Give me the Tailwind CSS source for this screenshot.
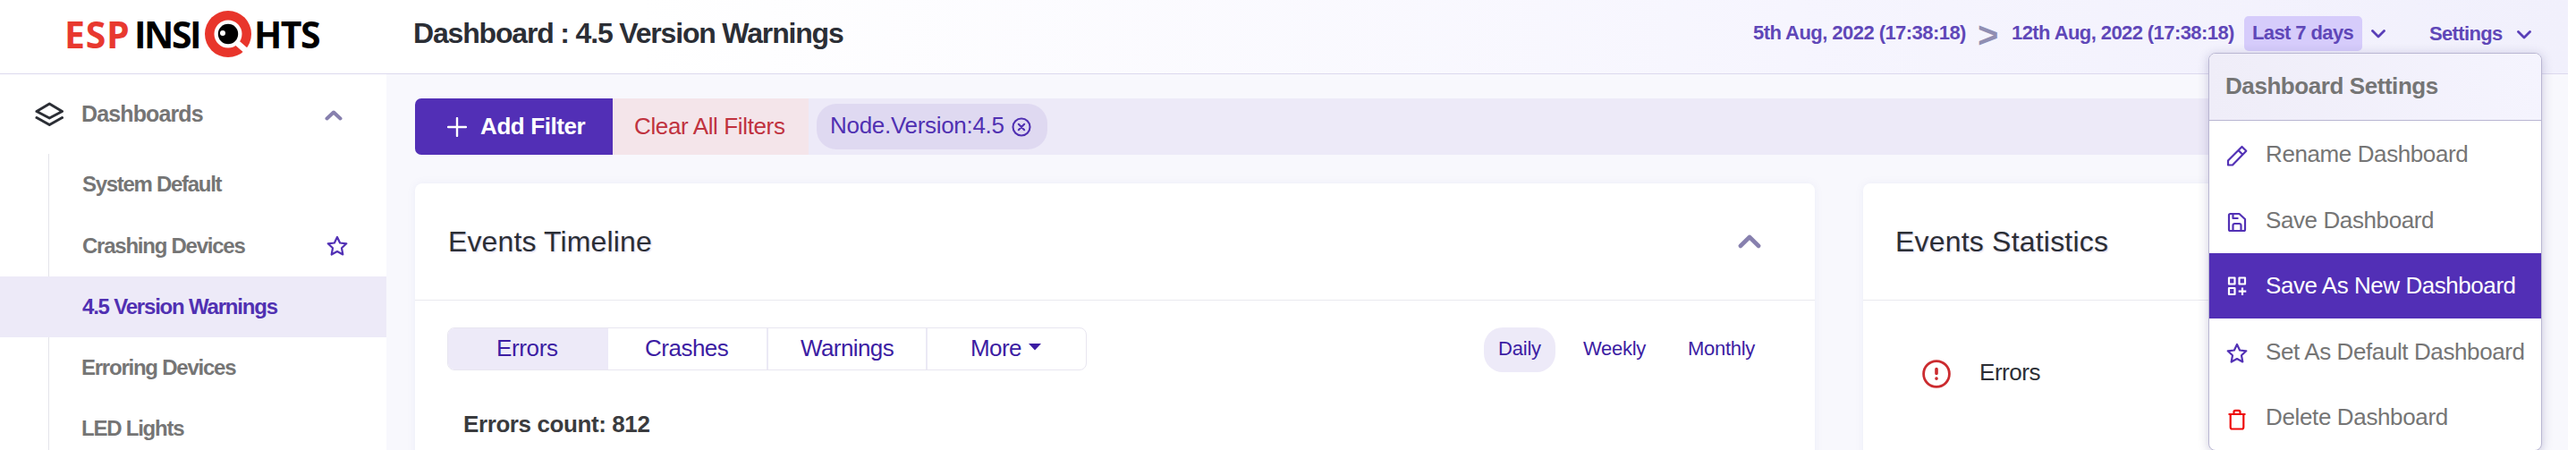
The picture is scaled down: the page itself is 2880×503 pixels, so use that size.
<!DOCTYPE html>
<html lang="en">
<head>
<meta charset="utf-8">
<title>ESP Insights</title>
<script src="https://cdn.jsdelivr.net/npm/@tailwindcss/browser@4"></script>
</head>
<body class="bg-white font-['Liberation_Sans',Arial,sans-serif] whitespace-nowrap">
<div class="relative w-[2880px] h-[503px] overflow-hidden flex flex-col">

  <!-- Top bar -->
  <header class="w-[2871px] h-[83px] shrink-0 border-b border-[#dcd9ee] bg-linear-to-r from-white from-25% via-[#f6f5fe] via-70% to-[#f1f0fc] flex">
    <div class="w-[462px] h-[75px] flex items-center pl-[72px] font-['Open_Sans',sans-serif] font-bold text-[41px] leading-[60px]">
      <span class="w-[78px] text-[#e8392f] tracking-[0.7px]">ESP</span>
      <span class="w-[78px] text-black tracking-[-2.5px]">INSI</span>
      <svg class="w-[54px] h-[54px] shrink-0 mt-px" viewBox="-27 -27 54 54">
        <circle r="26" fill="#e8352b"/>
        <circle r="15.5" fill="#fff"/>
        <path d="M9 9L21 19.5" stroke="#fff" stroke-width="6.5"/>
        <circle r="11.2" fill="#000"/>
        <circle cx="-6" cy="-1" r="3" fill="#fff"/>
      </svg>
      <span class="pl-[2px] text-black tracking-[-1.6px]">HTS</span>
    </div>
    <h1 class="w-[1498px] leading-[74px] font-bold text-[32px] tracking-[-1.17px] text-[#2b2e35]">Dashboard : 4.5 Version Warnings</h1>
    <div class="flex h-[74px] leading-[74px] text-[22px] font-bold text-[#5f47b8]">
      <span class="w-[250px] tracking-[-0.55px]">5th Aug, 2022 (17:38:18)</span>
      <span class="w-[39px] pl-px text-[40px] leading-[78px] text-[#908eb2]">&gt;</span>
      <span class="w-[260px] tracking-[-0.58px]">12th Aug, 2022 (17:38:18)</span>
      <span class="w-[132px] h-[39px] mt-[18px] leading-[38px] pl-[9px] rounded-[5px] bg-[#d6ccfb] tracking-[-0.6px]">Last 7 days</span>
      <svg class="w-4 h-3 ml-[10px] mt-8" viewBox="0 0 16 12" fill="none" stroke="#5a3fb8" stroke-width="2.8" stroke-linecap="round" stroke-linejoin="round"><path d="M1.500 2.500L8 9L14.500 2.500"/></svg>
      <span class="ml-[49px] w-[98px] leading-[75px] tracking-[-0.65px]">Settings</span>
      <svg class="w-4 h-3 mt-[33px]" viewBox="0 0 16 12" fill="none" stroke="#5a3fb8" stroke-width="2.8" stroke-linecap="round" stroke-linejoin="round"><path d="M1.500 2.500L8 9L14.500 2.500"/></svg>
    </div>
  </header>

  <div class="flex w-[2871px] h-[420px]">
    <!-- Sidebar -->
    <nav class="w-[432px] shrink-0 bg-white font-bold text-[#757575]">
      <div class="h-[89px] flex items-center pl-[39px]">
        <svg class="w-[33px] h-[28px]" viewBox="0 0 33 28" fill="none" stroke="#2b2e35" stroke-width="3" stroke-linecap="round" stroke-linejoin="round"><path d="M16.300 2L30.500 10.500L16.300 18L2 10.500ZM2 17.500L16.300 25.500L30.500 17.500"/></svg>
        <span class="ml-[19px] w-[272px] text-[25px] tracking-[-0.87px]">Dashboards</span>
        <svg class="w-5 h-3 mt-[2px]" viewBox="0 0 20 12" fill="none" stroke="#8780ae" stroke-width="4" stroke-linecap="round" stroke-linejoin="round"><path d="M2.500 9.500L10 2.500L17.500 9.500"/></svg>
      </div>
      <ul class="text-[24px] tracking-[-1.24px]">
        <li class="h-[68px] flex items-center"><i class="w-[55px] h-full border-r border-[#e4e4ea]"></i><span class="pl-[37px] tracking-[-1.3px]">System Default</span></li>
        <li class="h-[69px] flex items-center"><i class="w-[55px] h-full border-r border-[#e4e4ea]"></i><span class="pl-[37px] w-[310px]">Crashing Devices</span>
          <svg class="w-6 h-6" viewBox="0 0 24 24" fill="none" stroke="#5231b5" stroke-width="2.200" stroke-linejoin="round"><path d="M12 2L15.100 8.500L22.300 9.300L17 14.200L18.300 21.500L12 18L5.700 21.500L7 14.200L1.700 9.300L8.900 8.500Z"/></svg>
        </li>
        <li class="h-[68px] flex items-center bg-[#edeaf8] text-[#5030b2]"><span class="pl-[92px] tracking-[-1.2px]">4.5 Version Warnings</span></li>
        <li class="h-[68px] flex items-center"><i class="w-[55px] h-full border-r border-[#e4e4ea]"></i><span class="pl-[36px]">Erroring Devices</span></li>
        <li class="h-[68px] flex items-center"><i class="w-[55px] h-full border-r border-[#e4e4ea]"></i><span class="pl-[36px]">LED Lights</span></li>
      </ul>
    </nav>

    <!-- Content -->
    <main class="grow bg-[#f8f8fd] pt-[27px] pl-8 pr-[34px]">
      <div class="flex h-[63px] rounded-[7px] overflow-hidden bg-[#edeaf8] text-[26px] leading-[63px]">
        <div class="w-[221px] bg-[#522fb6] text-white font-bold flex items-center">
          <svg class="ml-[36px] w-[22px] h-[22px]" viewBox="0 0 22 22" stroke="#fff" stroke-width="2.400" stroke-linecap="round"><path d="M11 1V21M1 11H21"/></svg>
          <span class="ml-[15px] tracking-[-0.4px]">Add Filter</span>
        </div>
        <div class="w-[219px] bg-[#f4e5ea] text-[#c0323e] pl-[24px] tracking-[-0.37px]">Clear All Filters</div>
        <div class="ml-[9px] mt-[6px] w-[258px] h-[51px] rounded-[22px] bg-[#dfd9f1] text-[#5030b2] flex">
          <span class="ml-[15px] w-[203px] leading-[49px] tracking-[-0.3px]">Node.Version:4.5</span>
          <svg class="w-[22px] h-[22px] mt-[15px]" viewBox="0 0 22 22" fill="none" stroke="#5030b2" stroke-width="2.100" stroke-linecap="round"><circle cx="11" cy="11" r="9.500"/><path d="M7.800 7.800L14.200 14.200M14.200 7.800L7.800 14.200"/></svg>
        </div>
      </div>

      <div class="mt-8 flex gap-[54px]">
        <section class="w-[1565px] h-[320px] rounded-t-[8px] bg-white shadow-[0_0_10px_rgba(110,120,190,0.09)]">
          <div class="h-[131px] border-b border-[#eaeaef] flex items-center pl-[37px] text-[#2b2e35]">
            <h2 class="w-[1441px] text-[32px] tracking-[0.13px] [text-shadow:1px_1px_2px_#d5d2ea]">Events Timeline</h2>
            <svg class="w-[28px] h-[18px]" viewBox="0 0 28 18" fill="none" stroke="#8780ae" stroke-width="4.600" stroke-linecap="round" stroke-linejoin="round"><path d="M3.800 14L14 4L24.200 14"/></svg>
          </div>
          <div class="flex justify-between pt-[30px] pl-9 pr-[56px] text-[#3c1da3]">
            <div class="w-[715px] h-[48px] flex rounded-[8px] border border-[#e8e6f0] overflow-hidden text-[26px] leading-[45px]">
              <span class="w-[179px] bg-[#edeaf8] pl-[54px] tracking-[-0.36px]">Errors</span>
              <span class="w-[179px] border-r-2 border-[#ebe9f5] pl-[41px] tracking-[-0.5px]">Crashes</span>
              <span class="w-[178px] border-r-2 border-[#ebe9f5] pl-[36px] tracking-[-0.6px]">Warnings</span>
              <span class="pl-[48px] tracking-[-0.59px]">More</span>
              <svg class="ml-[8px] mt-[17px] w-[14px] h-[8px]" viewBox="0 0 14 8" fill="#3c1da3"><path d="M0 0H14L7 7.500Z"/></svg>
            </div>
            <div class="flex h-[50px] text-[22px] leading-[48px]">
              <span class="w-20 rounded-[21px] bg-[#edeaf8] pl-[16px] tracking-[-0.2px]">Daily</span>
              <span class="ml-[31px] w-[117px] tracking-[-0.3px]">Weekly</span>
              <span class="w-[86px] tracking-[-0.3px]">Monthly</span>
            </div>
          </div>
          <div class="pl-[54px] mt-[43px] text-[26px] leading-[30px] font-bold tracking-[-0.4px] text-[#3a3b3e]">Errors count: 812</div>
        </section>

        <section class="grow h-[320px] rounded-t-[8px] bg-white shadow-[0_0_10px_rgba(110,120,190,0.09)]">
          <div class="h-[131px] border-b border-[#eaeaef] flex items-center pl-[36px] text-[#2b2e35]">
            <h2 class="text-[32px] tracking-[0.2px] [text-shadow:1px_1px_2px_#d5d2ea]">Events Statistics</h2>
          </div>
          <div class="flex items-center mt-[64px] pl-[66px]">
            <svg class="w-8 h-8" viewBox="0 0 32 32" fill="none" stroke="#cb2b2f" stroke-width="2.800" stroke-linecap="round"><circle cx="16" cy="16" r="14.400"/><path d="M16 10.500V15.500M16 21V21.200" stroke-width="3.600"/></svg>
            <span class="ml-[32px] -mt-[3px] text-[26px] tracking-[-0.45px] text-[#2b2e35]">Errors</span>
          </div>
        </section>
      </div>
    </main>
  </div>

  <!-- Settings menu -->
  <div class="absolute left-[2469px] top-[59px] w-[373px] h-[445px] rounded-[8px] border border-[#b9b6d2] bg-white shadow-[0_2px_12px_rgba(60,50,120,0.25)] overflow-hidden text-[26px] text-[#757575]">
    <div class="h-[75px] border-b border-[#b9b6d2] bg-linear-to-r from-[#efedf8] to-[#f5f4fe] pl-[18px] leading-[73px] font-bold tracking-[-0.43px]">Dashboard Settings</div>
    <div class="h-[74px] flex items-center pl-[19px]">
      <svg class="w-6 h-6 mt-[3px]" viewBox="0 0 24 24" fill="none" stroke="#5231b5" stroke-width="2.200" stroke-linejoin="round"><path d="M2 22.500V17.500L17.500 2L22.300 6.800L7 22.500ZM13.500 6L18.300 10.800"/></svg>
      <span class="ml-[20px] tracking-[-0.4px]">Rename Dashboard</span>
    </div>
    <div class="h-[74px] flex items-center pl-[19px]">
      <svg class="w-6 h-6 mt-[3px]" viewBox="0 0 24 24" fill="none" stroke="#5231b5" stroke-width="2.200" stroke-linejoin="round"><path d="M4 3H14.500L21 9V20.500Q21 22 19.500 22H4.500Q3 22 3 20.500V4.500Q3 3 4.500 3M7.500 3V8H13.500M7.500 22V16Q7.500 14 9.500 14H14.500Q16.500 14 16.500 16V22"/></svg>
      <span class="ml-[20px] tracking-[-0.4px]">Save Dashboard</span>
    </div>
    <div class="h-[73px] flex items-center pl-[19px] bg-[#522fb6] text-white">
      <svg class="w-6 h-6 mt-px" viewBox="0 0 24 24" fill="none" stroke="#fff" stroke-width="2.200" stroke-linejoin="round"><path d="M3 2.500H9.500V9.500H3ZM14.500 2.500H21V9.500H14.500ZM3 14H9.500V21H3ZM18 13.500V22M13.700 17.700H22.300"/></svg>
      <span class="ml-[20px] tracking-[-0.45px]">Save As New Dashboard</span>
    </div>
    <div class="h-[74px] flex items-center pl-[19px]">
      <svg class="w-6 h-6 mt-[3px]" viewBox="0 0 24 24" fill="none" stroke="#5231b5" stroke-width="2.200" stroke-linejoin="round"><path d="M12 2L15.100 8.500L22.300 9.300L17 14.200L18.300 21.500L12 18L5.700 21.500L7 14.200L1.700 9.300L8.900 8.500Z"/></svg>
      <span class="ml-[20px] tracking-[-0.4px]">Set As Default Dashboard</span>
    </div>
    <div class="h-[73px] flex items-center pl-[19px]">
      <svg class="w-6 h-6 mt-[4px]" viewBox="0 0 24 24" fill="none" stroke="#ee0a0a" stroke-width="2.200" stroke-linejoin="round"><path d="M2.500 6H21.500M4.700 6V20.500Q4.700 22.500 6.700 22.500H17.300Q19.300 22.500 19.300 20.500V6M8.500 6V3.500Q8.500 1.800 10.200 1.800H13.800Q15.500 1.800 15.500 3.500V6"/></svg>
      <span class="ml-[20px] tracking-[-0.36px]">Delete Dashboard</span>
    </div>
  </div>
</div>
</body>
</html>
